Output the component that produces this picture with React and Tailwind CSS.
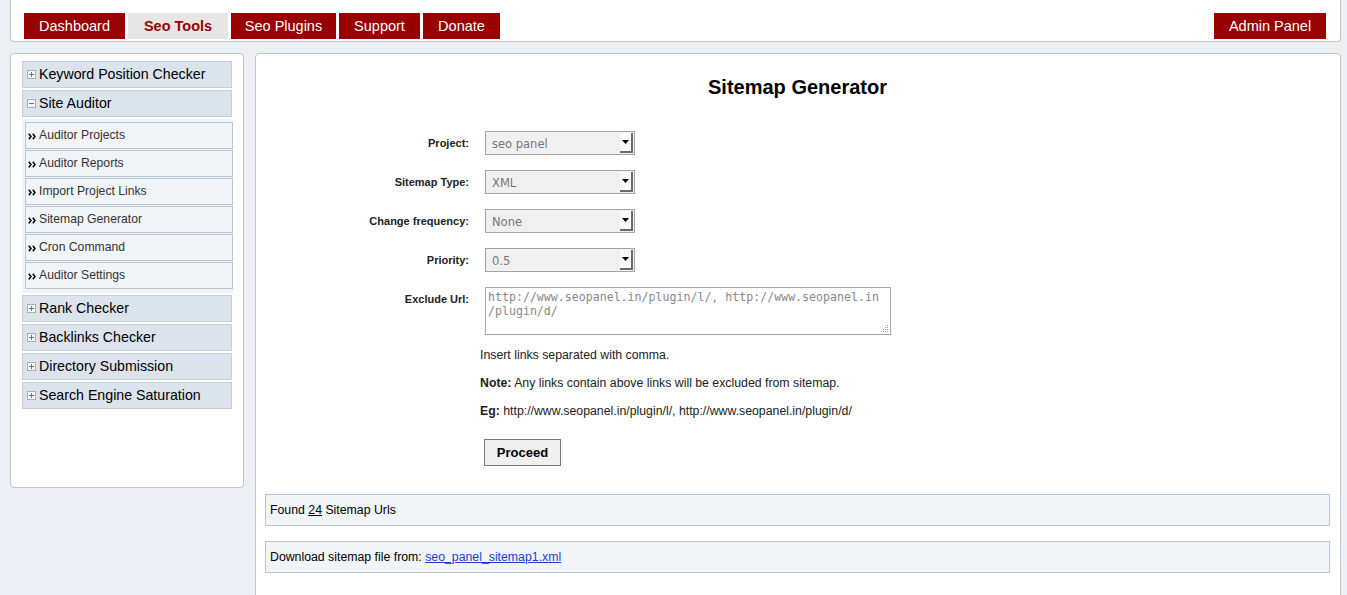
import React from "react";

const font = { fontFamily: '"Liberation Sans", Arial, sans-serif' };

function Tab({ children, active, w }) {
  return (
    <div
      className={
        (active
          ? "h-[26px] pt-[2px] flex items-center justify-center bg-[#e6e6e6] text-[#990000] font-bold text-[14.5px] "
          : "h-[26px] pt-[2px] flex items-center justify-center bg-[#990000] text-white text-[14.5px] ") + w
      }
    >
      {children}
    </div>
  );
}

function PlusBox({ minus }) {
  return (
    <svg width="9" height="9" viewBox="0 0 9 9" className="shrink-0">
      <rect x="0.5" y="0.5" width="8" height="8" fill="#f4f6f8" stroke="#a9b1b8" />
      <line x1="2" y1="4.5" x2="7" y2="4.5" stroke="#6b7278" />
      {!minus && <line x1="4.5" y1="2" x2="4.5" y2="7" stroke="#6b7278" />}
    </svg>
  );
}

function SideHead({ children, minus }) {
  return (
    <div className="h-[27px] flex items-center gap-[3px] pl-[4px] bg-[#dbe4ec] border border-[#c8ced4] text-[14.2px] text-black">
      <PlusBox minus={minus} />
      <span>{children}</span>
    </div>
  );
}

function SubItem({ children }) {
  return (
    <div className="h-[27px] flex items-center pl-[2px] bg-[#f2f5f8] border border-[#b9c6d1] text-[12.2px] text-[#333]">
      <svg width="8" height="7" viewBox="0 0 8 7" className="shrink-0 mt-[1px]">
        <polyline points="0.8,0.8 3,3.5 0.8,6.2" fill="none" stroke="#000" strokeWidth="1.5" />
        <polyline points="4.8,0.8 7,3.5 4.8,6.2" fill="none" stroke="#000" strokeWidth="1.5" />
      </svg>
      <span className="ml-[3px]">{children}</span>
    </div>
  );
}

function Select({ value }) {
  return (
    <div className="w-[150px] h-[24px] border border-[#a5a5a5] bg-[#f0f0f0] flex items-stretch">
      <div className="flex-1 flex items-center pl-[6px] pt-[4px] text-[#777]" style={{ fontFamily: '"DejaVu Sans", sans-serif', fontSize: "11.5px" }}>
        {value}
      </div>
      <div className="w-[13px] my-[1px] mr-[1px] bg-[#fafafa] border-r-2 border-b-2 border-[#6a6a6a] flex items-center justify-center">
        <svg width="7" height="4" viewBox="0 0 7 4">
          <polygon points="0,0 7,0 3.5,4" fill="#000" />
        </svg>
      </div>
    </div>
  );
}

function Row({ label, children, mt }) {
  return (
    <div className={"flex items-start " + mt}>
      <div className="w-[204px] text-right text-[11px] font-bold text-[#222] pt-[4px]">{label}</div>
      <div className="ml-[16px]">{children}</div>
    </div>
  );
}

export default function App() {
  return (
    <div className="min-h-[595px] bg-[#eceff3] pl-[10px] pr-[6px] pb-4" style={font}>
      <div className="h-[42px] bg-white border-x border-b border-[#c4c4c4] rounded-b-[4px] flex items-start justify-between pl-[13px] pr-[14px] pt-[13px]">
        <div className="flex gap-[3px]">
          <Tab w="w-[101px]">Dashboard</Tab>
          <Tab active w="w-[100px]">Seo Tools</Tab>
          <Tab w="w-[105px]">Seo Plugins</Tab>
          <Tab w="w-[81px]">Support</Tab>
          <Tab w="w-[77px]">Donate</Tab>
        </div>
        <div className="h-[26px] w-[112px] pt-[2px] flex items-center justify-center bg-[#990000] text-white text-[14.5px]">Admin Panel</div>
      </div>

      <div className="flex gap-[11px] mt-[11px] items-start">
        <div className="w-[234px] h-[435px] shrink-0 bg-white border border-[#c4c4c4] rounded-[4px] pt-[7px] pl-[11px] pr-[11px]">
          <div className="flex flex-col gap-[2px]">
            <SideHead>Keyword Position Checker</SideHead>
            <SideHead minus>Site Auditor</SideHead>
            <div className="bg-[#f2f5f8] pl-[3px] pr-0 pt-[3px] pb-[4px] mr-[-1px] flex flex-col gap-[1px]">
              <SubItem>Auditor Projects</SubItem>
              <SubItem>Auditor Reports</SubItem>
              <SubItem>Import Project Links</SubItem>
              <SubItem>Sitemap Generator</SubItem>
              <SubItem>Cron Command</SubItem>
              <SubItem>Auditor Settings</SubItem>
            </div>
            <SideHead>Rank Checker</SideHead>
            <SideHead>Backlinks Checker</SideHead>
            <SideHead>Directory Submission</SideHead>
            <SideHead>Search Engine Saturation</SideHead>
          </div>
        </div>

        <div className="flex-1 min-h-[560px] bg-white border border-[#c4c4c4] rounded-[4px] pl-[9px] pr-[10px] pt-[20px]">
          <h1 className="text-center text-[20px] font-bold text-black leading-[26px]">Sitemap Generator</h1>
          <div className="mt-[31px]">
            <Row label="Project:" mt="">
              <Select value="seo panel" />
            </Row>
            <Row label="Sitemap Type:" mt="mt-[15px]">
              <Select value="XML" />
            </Row>
            <Row label="Change frequency:" mt="mt-[15px]">
              <Select value="None" />
            </Row>
            <Row label="Priority:" mt="mt-[15px]">
              <Select value="0.5" />
            </Row>
            <Row label="Exclude Url:" mt="mt-[15px]">
              <div className="relative w-[406px] h-[48px] border border-[#a5a5a5] bg-white px-[2px] pt-[2px] text-[#888] leading-[14px]" style={{ fontFamily: '"DejaVu Sans Mono", monospace', fontSize: "11.6px" }}>
                http://www.seopanel.in/plugin/l/, http://www.seopanel.in
                <br />/plugin/d/
                <svg className="absolute right-[1px] bottom-[1px]" width="9" height="9" viewBox="0 0 9 9">
                  <g fill="#9a9a9a">
                    <rect x="7" y="1" width="1" height="1" />
                    <rect x="5" y="3" width="1" height="1" />
                    <rect x="7" y="3" width="1" height="1" />
                    <rect x="3" y="5" width="1" height="1" />
                    <rect x="5" y="5" width="1" height="1" />
                    <rect x="7" y="5" width="1" height="1" />
                    <rect x="1" y="7" width="1" height="1" />
                    <rect x="3" y="7" width="1" height="1" />
                    <rect x="5" y="7" width="1" height="1" />
                    <rect x="7" y="7" width="1" height="1" />
                  </g>
                </svg>
              </div>
            </Row>
            <div className="ml-[215px] text-[12.3px] text-[#222]">
              <div className="mt-[13px] leading-[14px]">Insert links separated with comma.</div>
              <div className="mt-[14px] leading-[14px]"><b>Note:</b> Any links contain above links will be excluded from sitemap.</div>
              <div className="mt-[14px] leading-[14px]"><b>Eg:</b> http://www.seopanel.in/plugin/l/, http://www.seopanel.in/plugin/d/</div>
              <button className="mt-[21px] ml-[4px] w-[77px] h-[27px] border border-[#7a7a7a] bg-[#efefef] text-[13px] font-bold text-black" style={font}>Proceed</button>
            </div>
          </div>

          <div className="mt-[28px] h-[32px] border border-[#b9c6d1] bg-[#f2f5f8] flex items-center pl-[4px] text-[12.3px] text-black">
            Found&nbsp;<span className="underline">24</span>&nbsp;Sitemap Urls
          </div>
          <div className="mt-[15px] h-[32px] border border-[#b9c6d1] bg-[#f2f5f8] flex items-center pl-[4px] text-[12.3px] text-black">
            Download sitemap file from:&nbsp;<a href="#" className="underline text-[#1a3fd6]">seo_panel_sitemap1.xml</a>
          </div>
        </div>
      </div>
    </div>
  );
}
